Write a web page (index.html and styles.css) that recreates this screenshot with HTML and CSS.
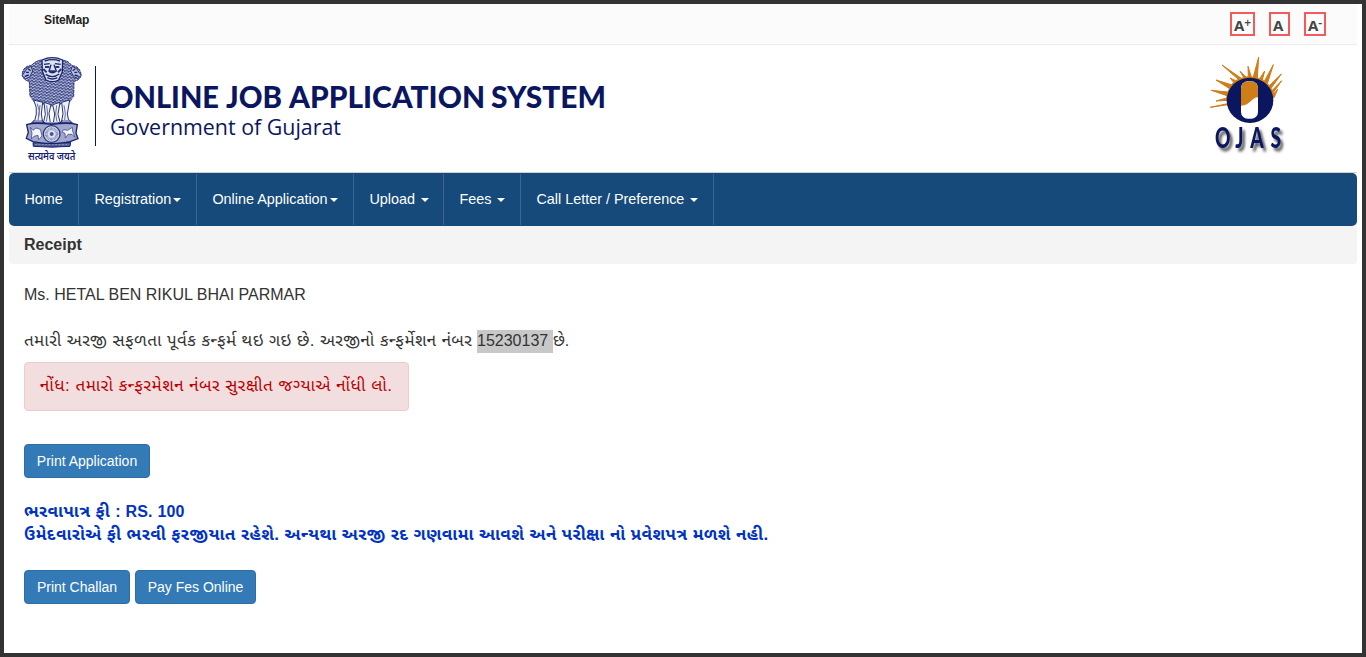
FILE: index.html
```html
<!DOCTYPE html>
<html lang="gu">
<head>
<meta charset="utf-8">
<title>Online Job Application System</title>
<link rel="stylesheet" href="styles.css">
</head>
<body>
<div class="page">
  <div class="topbar">
    <a class="sitemap">SiteMap</a>
    <div class="sizes"><a class="size plus">A<sup>+</sup></a><a class="size normal">A</a><a class="size minus">A<sup>-</sup></a></div>
  </div>
  <header class="header">
    <svg class="emblem" viewBox="60 30 192 321">
      <defs>
        <pattern id="mane" width="11" height="9" patternUnits="userSpaceOnUse" patternTransform="rotate(8)">
          <rect width="11" height="9" fill="#929ac4"/>
          <path d="M0 1l5 5 6-5M5 6v3" fill="none" stroke="#17246f" stroke-width="2.8"/>
          <path d="M3 1l2 2 3-2M0 7h2M9 7h2" fill="none" stroke="#fff" stroke-width="2"/>
        </pattern>
      </defs>
      <path d="M124 45C104 48 100 58 92 62C76 62 66 76 67 91C70 103 80 108 88 109L90 155L98 168L107 176L118 170L130 180L143 174L155 186L168 174L180 180L193 170L203 176L213 168L221 155L222 109C234 107 243 99 243 89C242 76 234 63 216 62C209 55 207 49 190 46Q157 30 124 45Z" fill="url(#mane)"/>
      <path d="M124 45C104 48 100 58 92 62C76 62 66 76 67 91C70 103 80 108 88 109L90 155M221 155L222 109C234 107 243 99 243 89C242 76 234 63 216 62C209 55 207 49 190 46" fill="none" stroke="#27347b" stroke-width="3" stroke-dasharray="9 2"/>
      <path d="M126 45Q157 31 188 45L187 80L176 105Q157 115 138 105L127 79Z" fill="#dfe1ef" stroke="#17246f" stroke-width="4"/>
      <path d="M134 48Q157 40 180 48M132 58L149 56M182 58L165 56M153 59L147 79Q157 88 169 78L162 59M137 88Q157 102 178 87M142 98Q157 106 172 98" fill="none" stroke="#17246f" stroke-width="4"/>
      <path d="M135 66h13M166 66h12M148 79h18M130 72l10 10M184 72l-10 10" stroke="#27347b" stroke-width="6"/>
      <path d="M93 64Q78 68 73 83L66 92L77 101L89 96L98 78ZM217 64Q232 68 237 82L244 91L233 100L221 95L212 78Z" fill="#b9bedb" stroke="#27347b" stroke-width="3"/>
      <path d="M78 82h9M223 82h9M74 94l12-4M224 90l12 4M84 71l8 6M226 71l-8 6" stroke="#17246f" stroke-width="4"/>
      <path d="M101 165Q112 186 109 207L103 232H128L124 207L128 172ZM132 172L136 208L130 234H151L147 205L153 179ZM158 179L164 207L160 234H181L174 208L180 172ZM185 172L189 207L184 232H207L202 207L209 165Z" fill="#eef0f7" stroke="#27347b" stroke-width="3"/>
      <path d="M112 176L118 199L114 228M120 180L116 216M140 181L143 207L139 230M170 181L167 207L171 230M192 181L196 205L194 226" fill="none" stroke="#66709f" stroke-width="3"/>
      <path d="M103 225l-8 9h38l-7-8M135 231l-5 6h50l-4-6M187 226l-6 8h36l-10-10" fill="#8e96bd" stroke="#17246f" stroke-width="3"/>
      <path d="M80 239Q104 231 155 238Q207 231 232 239L228 264L234 281L210 290Q157 302 99 290L79 280L85 262Z" fill="#a2a8cc" stroke="#17246f" stroke-width="4"/>
      <path d="M91 247l8 9 9-7 13 4 5 20-10 11-2-13-12 3-8 8 2-18ZM191 254l12 2 14-9 1 12 7 18-9-9-12 0-8 11-1-14-9-4Z" fill="#f4f5fa" stroke="#27347b" stroke-width="2"/>
      <circle cx="155" cy="267" r="25" fill="#dfe2ef" stroke="#27347b" stroke-width="4"/>
      <circle cx="155" cy="267" r="16" fill="none" stroke="#6f78ab" stroke-width="9" stroke-dasharray="2 2"/>
      <circle cx="155" cy="267" r="6" fill="#4c5794"/>
      <path d="M99 293Q155 301 212 292L210 304Q157 309 100 304Z" fill="#4c5794" stroke="#17246f" stroke-width="3"/>
      <path d="M105 299h102" stroke="#aeb3d2" stroke-width="2" stroke-dasharray="7 3"/>
      <text x="84" y="344" class="motto" textLength="142" lengthAdjust="spacingAndGlyphs">सत्यमेव जयते</text>
    </svg>
    <span class="rule"></span>
    <svg class="brand" viewBox="0 0 510 70">
      <g class="brand-title">
        <text x="0" y="33" textLength="109" lengthAdjust="spacingAndGlyphs">ONLINE</text>
        <text x="116" y="33" textLength="56" lengthAdjust="spacingAndGlyphs">JOB</text>
        <text x="179" y="33" textLength="196" lengthAdjust="spacingAndGlyphs">APPLICATION</text>
        <text x="381" y="33" textLength="115" lengthAdjust="spacingAndGlyphs">SYSTEM</text>
      </g>
      <text x="0" y="60" class="brand-sub" textLength="231" lengthAdjust="spacingAndGlyphs">Government of Gujarat</text>
    </svg>
    <svg class="ojas" viewBox="54 15 240 306">
      <path fill="#cf7d16" stroke="#cf7d16" stroke-width="3" stroke-linejoin="round" d="M61 172L113 161L111 151L78 153L110 144L111 137L64 121L113 126L119 116L78 90L124 104L131 97L120 84L137 92L145 88L96 45L154 85L161 82L150 64L168 81L175 80L174 49L184 81L190 81L206 21L202 84L209 86L224 63L217 90L223 94L250 44L232 101L238 107L274 72L243 115L247 121L275 92L250 128L251 132L263 118L252 143Z"/>
      <ellipse cx="180" cy="151" rx="70" ry="68" fill="#0a1760"/>
      <rect x="153" y="94" width="51" height="112" rx="20" fill="#fff"/>
      <path d="M153 167V116Q154 94 176 94H181Q204 95 204 117V142C185 142 182 166 153 167Z" fill="#cf7d16"/>
      <text transform="scale(.66 1)" x="114 206 274 366" y="294" class="ojas-name">OJAS</text>
    </svg>
  </header>
  <nav class="nav">
    <a class="w1">Home</a><a class="w2">Registration<i class="caret tight"></i></a><a class="w3">Online Application<i class="caret tight"></i></a><a class="w4">Upload<i class="caret"></i></a><a class="w5">Fees<i class="caret"></i></a><a class="w6">Call Letter / Preference<i class="caret"></i></a>
  </nav>
  <h1 class="heading">Receipt</h1>
  <main class="content">
    <p class="name">Ms. HETAL BEN RIKUL BHAI PARMAR</p>
    <p class="confirm"><span class="c1">તમારી અરજી સફળતા પૂર્વક કન્ફર્મ થઇ ગઇ છે. અરજીનો કન્ફર્મેશન નંબર</span><span class="number">15230137</span><span>છે.</span></p>
    <div class="alert">નોંધ: તમારો કન્ફરમેશન નંબર સુરક્ષીત જગ્યાએ નોંધી લો.</div>
    <div class="buttons first"><a class="btn b1">Print Application</a></div>
    <p class="fee">ભરવાપાત્ર ફી <span class="amount">: RS. 100</span></p>
    <p class="fee note">ઉમેદવારોએ ફી ભરવી ફરજીયાત રહેશે. અન્યથા અરજી રદ ગણવામા આવશે અને પરીક્ષા નો પ્રવેશપત્ર મળશે નહી.</p>
    <div class="buttons second"><a class="btn b2">Print Challan</a><a class="btn b3">Pay Fes Online</a></div>
  </main>
</div>
</body>
</html>
```
FILE: styles.css
```css
* { box-sizing: border-box; }
body { margin: 0; background: #fff; color: #333; font: 14px/20px "Liberation Sans", "Noto Sans Gujarati", sans-serif; }
p, h1 { margin: 0; }
.page { height: 657px; border: 4px solid #333; padding: 0 5px; overflow: hidden; display: flex; flex-direction: column; }
.topbar { height: 41px; flex: none; background: #fbfbfb; border-bottom: 1px solid #ececec; display: flex; justify-content: space-between; padding: 8px 31px 0 35px; }
.sitemap { font: bold 12px/17px "Liberation Sans", sans-serif; letter-spacing: -.1px; color: #222; }
.sizes { display: flex; }
.size { height: 24px; border: 2px solid #f05b5b; font: bold 15px/22px "Open Sans", sans-serif; color: #444; padding-left: 2px; white-space: nowrap; }
.size sup { font-size: 12px; font-weight: 600; line-height: 0; vertical-align: 4px; }
.plus { width: 25px; margin-right: 14px; }
.normal { width: 21px; margin-right: 14px; }
.minus { width: 22px; }
.header { height: 128px; flex: none; border-bottom: 1px solid #d2d2d2; display: flex; align-items: flex-start; padding: 10px 69px 0 11px; }
.emblem { width: 64px; height: 107px; overflow: visible; }
.motto { font: 600 32px "Noto Sans Devanagari", "Noto Sans", sans-serif; fill: #17246f; }
.rule { width: 1px; height: 80px; margin: 11px 14px 0 11px; background: #0a1760; }
.brand { width: 510px; height: 70px; margin-top: 20px; overflow: visible; }
.brand-title { font: 900 31px Lato, sans-serif; fill: #0a1760; }
.brand-sub { font: 22.5px "Open Sans", sans-serif; fill: #0a1760; }
.ojas { width: 80px; height: 102px; margin-left: auto; overflow: visible; }
.ojas-name { font: 900 87px Lato, sans-serif; fill: #0a1760; filter: drop-shadow(12px 10px 5px #555); }
.nav { height: 53px; flex: none; background: #164a7a; border-radius: 5px; display: flex; padding: 1px 0; }
.nav a { border-right: 1px solid #3c678f; color: #fff; font-size: 14.4px; padding: 0 0 2px 15.4px; white-space: nowrap; display: flex; align-items: center; }
.w1 { width: 70px; } .w2 { width: 118px; } .w3 { width: 157px; } .w4 { width: 90px; } .w5 { width: 77px; } .w6 { width: 193px; }
.caret { border: 4px solid transparent; border-top-color: #fff; border-bottom: 0; margin: 3px 0 0 5.5px; }
.caret.tight { margin-left: 2px; }
.heading { height: 38px; flex: none; background: #f4f4f4; border-radius: 4px; padding-left: 15px; font-size: 16px; line-height: 38px; }
.content { padding: 21px 15px 0; font-size: 16px; }
.name { line-height: 20px; }
.confirm { margin-top: 25px; height: 23px; line-height: 21px; display: flex; white-space: nowrap; }
.c1 { width: 453px; font-size: 17px; letter-spacing: .4px; }
.number { background: #c8c8c8; width: 76px; }
.alert { margin-top: 9px; width: 385px; height: 49px; border: 1px solid #ebccd1; border-radius: 4px; background: #f2dede; color: #b90000; padding-left: 15px; font-size: 17px; letter-spacing: .5px; line-height: 46px; white-space: nowrap; }
.buttons { display: flex; gap: 5px; }
.first { margin-top: 33px; }
.btn { height: 34px; border: 1px solid #2e6da4; border-radius: 4px; background: #337ab7; color: #fff; font-size: 14px; line-height: 32px; text-align: center; white-space: nowrap; }
.b1 { width: 126px; } .b2 { width: 106px; } .b3 { width: 121px; }
.fee { color: #0033c4; font-weight: bold; font-size: 17px; letter-spacing: .43px; line-height: 23px; white-space: nowrap; }
.amount { font-size: 16px; letter-spacing: .2px; }
.first + .fee { margin-top: 22px; }
.second { margin-top: 24px; }
```
